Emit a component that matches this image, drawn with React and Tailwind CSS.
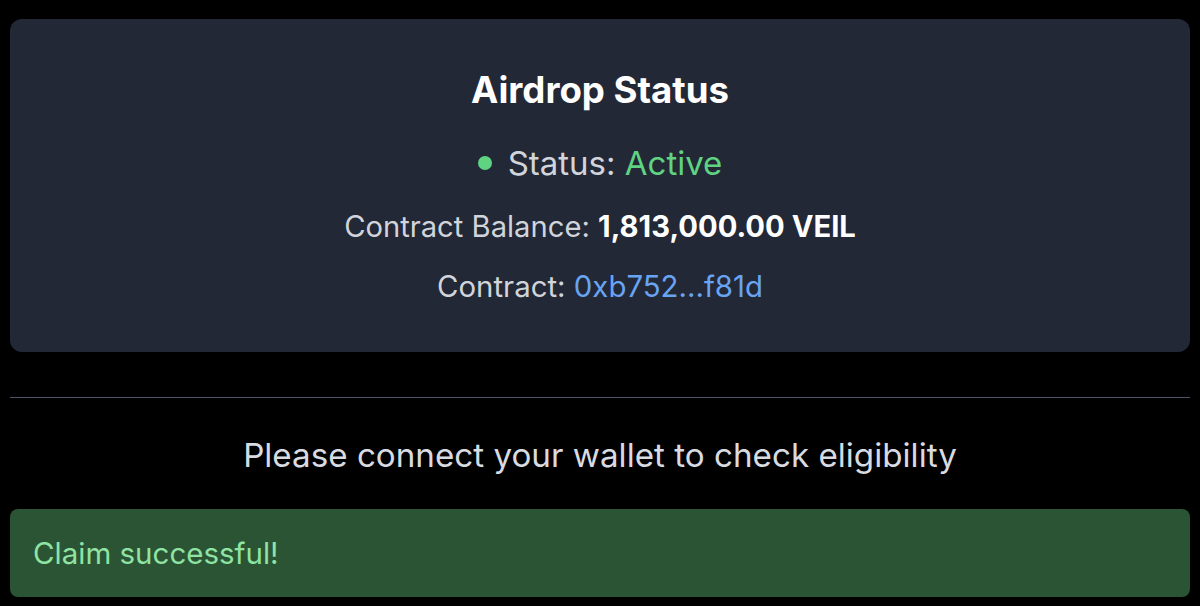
import React from "react";

const font = { fontFamily: "Inter, 'Noto Sans', sans-serif" };

const AirdropStatus = () => {
  return (
    <div className="bg-[#222836] rounded-[12px] pt-[51px] pb-[48px] flex flex-col items-center">
      <h2 className="text-[36.6px] leading-[40px] font-bold text-white">Airdrop Status</h2>
      <div className="mt-[34px] flex items-center gap-[16px] text-[33px] leading-[38px]">
        <span className="w-[14px] h-[14px] rounded-full bg-[#5fd381]" />
        <span className="text-[#d1d5db]">
          Status: <span className="text-[#5fd381]">Active</span>
        </span>
      </div>
      <p className="mt-[28px] text-[29.2px] leading-[34px] text-[#d1d5db]">
        Contract Balance: <span className="font-bold text-white">1,813,000.00 VEIL</span>
      </p>
      <p className="mt-[26px] text-[29.4px] leading-[34px] text-[#d1d5db]">
        Contract: <a className="text-[#68a4f2]">0xb752...f81d</a>
      </p>
    </div>
  );
};

export default function App() {
  return (
    <div className="min-h-screen bg-black px-[10px] pt-[19px] pb-[9px]" style={font}>
      <AirdropStatus />
      <hr className="mt-[45px] border-0 border-t border-[#4b5262]" />
      <p className="mt-[38px] text-center text-[33.2px] leading-[38px] text-[#d8dbe1]">
        Please connect your wallet to check eligibility
      </p>
      <div className="mt-[35px] h-[88px] rounded-[8px] bg-[#2a5434] px-[23px] flex items-center">
        <span className="text-[29.5px] leading-[34px] text-[#8fe3a3]">Claim successful!</span>
      </div>
    </div>
  );
}
